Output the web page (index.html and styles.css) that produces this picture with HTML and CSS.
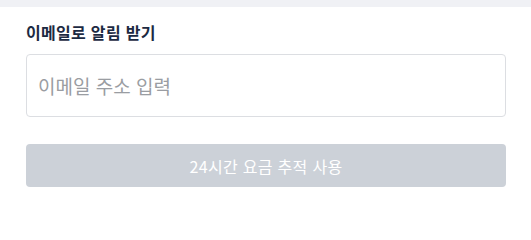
FILE: index.html
```html
<!DOCTYPE html>
<html lang="ko">
<head>
<meta charset="utf-8">
<link rel="stylesheet" href="styles.css">
</head>
<body>
<div class="topbar"></div>
<section class="panel">
  <label class="label" for="email">이메일로 알림 받기</label>
  <input id="email" class="input" type="email" placeholder="이메일 주소 입력">
  <button class="submit" type="button" disabled>24시간 요금 추적 사용</button>
</section>
</body>
</html>
```
FILE: styles.css
```css
html, body {
  margin: 0;
  padding: 0;
  background: #ffffff;
}
body {
  font-family: "Noto Sans CJK KR", "Noto Sans", sans-serif;
}
.topbar {
  height: 7px;
  background: #f0f1f5;
}
.panel {
  display: flex;
  flex-direction: column;
  padding: 14px 25px 0 26px;
}
.label {
  font-size: 16px;
  font-weight: 700;
  line-height: 23px;
  color: #1c2a42;
  letter-spacing: 0.3px;
}
.input {
  box-sizing: border-box;
  margin: 10px 0 0;
  height: 63px;
  padding: 0 11px;
  border: 1px solid #dcdee2;
  border-radius: 4px;
  font-family: inherit;
  font-size: 19px;
  color: #333;
  outline: none;
}
.input::placeholder {
  color: #9a9da2;
}
.submit {
  box-sizing: border-box;
  margin-top: 27px;
  height: 43px;
  border: none;
  border-radius: 4px;
  background: #ccd1d8;
  color: #ffffff;
  font-family: inherit;
  font-size: 16px;
  letter-spacing: 0.3px;
  padding: 0;
}
```
